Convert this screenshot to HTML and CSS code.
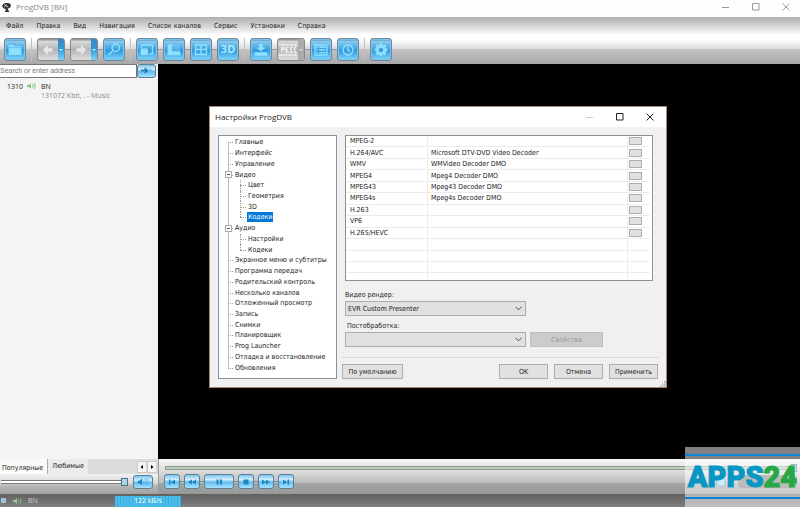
FILE: index.html
```html
<!DOCTYPE html>
<html lang="ru">
<head>
<meta charset="utf-8">
<title>ProgDVB [BN]</title>
<link rel="stylesheet" href="styles.css">
</head>
<body>
<div class="app">
  <header class="titlebar">
    <svg class="app-icon" viewBox="0 0 10 10"><path d="M1 3.5Q2 .5 5 1Q9 .5 9 3.5Q8.500 6 6 6L7.500 9H3.500L4.500 6.500Q1.500 6 1 3.500Z" fill="#333"/><path d="M3 2.500L6.500 4.500M3 4.500L5 2.500" stroke="#ddd" stroke-width=".9"/></svg>
    <span class="app-title">ProgDVB [BN]</span>
    <span class="win-buttons">
      <button aria-label="Свернуть"><svg viewBox="0 0 8 8"><path d="M0 4.500H7"/></svg></button>
      <button aria-label="Развернуть"><svg viewBox="0 0 8 8"><path d="M.5 .5H7V7H.5Z"/></svg></button>
      <button aria-label="Закрыть"><svg viewBox="0 0 8 8"><path d="M.5 .5L7.500 7.500M7.500 .5L.5 7.500"/></svg></button>
    </span>
  </header>

  <div class="top">
    <nav class="menu">
      <a href="#">Файл</a><a href="#">Правка</a><a href="#">Вид</a><a href="#">Навигация</a><a href="#">Список каналов</a><a href="#">Сервис</a><a href="#">Установки</a><a href="#">Справка</a>
    </nav>
    <div class="toolbar">
      <div class="group">
        <button class="tool" aria-label="Открыть"><svg viewBox="0 0 22 22"><path class="f" d="M4 6H9L10.500 7.500H18V17H4Z"/><path class="d" d="M4 9H18"/></svg></button>
      </div>
      <div class="group linked">
        <button class="tool split grey" aria-label="Назад"><svg viewBox="0 0 22 22"><path class="f" d="M5 11.500L11 6V9.500H16V13.500H11V17Z"/></svg><i class="drop"></i></button>
        <button class="tool split grey" aria-label="Вперёд"><svg viewBox="0 0 22 22"><path class="f" d="M17 11.500L11 6V9.500H6V13.500H11V17Z"/></svg><i class="drop"></i></button>
        <button class="tool" aria-label="Поиск"><svg viewBox="0 0 22 22"><circle class="l" cx="13" cy="9" r="4"/><path class="l" d="M10 12L5 17"/></svg></button>
      </div>
      <div class="group linked">
        <button class="tool" aria-label="Окно"><svg viewBox="0 0 22 22"><path class="l" d="M5 9V6H17V16H14"/><path class="f" d="M4 10H12V17H4Z"/></svg></button>
        <button class="tool" aria-label="Картинка в картинке"><svg viewBox="0 0 22 22"><path class="l" d="M10 6H5V16.500H17V13"/><path class="f" d="M10 6H18V13H10Z" opacity=".3"/><path class="f" d="M4 6H9V13H17V17H4Z"/></svg></button>
        <button class="tool" aria-label="Мозаика"><svg viewBox="0 0 22 22"><path class="l" d="M5 6H17V16.500H5ZM11 6V16.500M5 11H17"/></svg></button>
        <button class="tool label3d">3D</button>
      </div>
      <div class="group linked">
        <button class="tool" aria-label="Запись"><svg viewBox="0 0 22 22"><path class="f" d="M9 5H13V9H16L11 13L6 9H9ZM4 14H18V18H4Z"/></svg></button>
        <button class="tool split rec" aria-label="Rec"><svg viewBox="0 0 22 22"><path class="l" d="M1 6H20L18 11L20 17H1M4 14V9H7V11H4M12 9H9V14H12M9 11.500H11M17 9H14V14H17"/></svg><i class="drop"></i></button>
        <button class="tool" aria-label="Список"><svg viewBox="0 0 22 22"><path class="l" d="M4.500 6H17.500V17H4.500ZM6 8.500H7.500M9 8.500H16M6 11.500H7.500M9 11.500H16M6 14.500H7.500M9 14.500H16"/></svg></button>
        <button class="tool" aria-label="Расписание"><svg viewBox="0 0 22 22"><circle class="l" cx="11" cy="11.500" r="5.500"/><path class="l" d="M11 8V12L13.500 13.500"/></svg></button>
      </div>
      <div class="group">
        <button class="tool" aria-label="Настройки"><svg viewBox="0 0 22 22"><circle class="l thick" cx="11" cy="11.500" r="4"/><path class="l thick" d="M11 4.500V8M11 15V18.500M4 11.500H7M15 11.500H18M6 6.500L8.500 9M13.500 14L16 16.500M16 6.500L13.500 9M8.500 14L6 16.500"/></svg></button>
      </div>
    </div>
  </div>

  <div class="content">
    <aside class="side">
      <div class="search"><input type="text" placeholder="Search or enter address" aria-label="Search or enter address"><button class="glossy go" aria-label="Перейти"><svg viewBox="0 0 18 12"><path d="M3 5.500H9M7 3L10 5.500L7 8" fill="none" stroke="#1878b4" stroke-width="1.500"/><path d="M12.500 3V8M14.500 4V7" stroke="#62b4e0"/></svg></button></div>
      <div class="channels">
        <div class="channel">
          <span>1310</span>
          <svg class="speaker" viewBox="0 0 10 8"><path d="M0 3H2L4 1V7L2 5H0Z" fill="#7ac68a"/><path d="M5.500 2.500Q6.800 4 5.500 5.500M7 1Q9.800 4 7 7" fill="none" stroke="#7ac68a"/></svg>
          <div>BN<div class="rate">131072 Kbit, . - Music</div></div>
        </div>
      </div>
      <div class="tabs"><button class="tab on">Популярные</button><button class="tab">Любимые</button><span class="arrows"><button aria-label="Влево"><svg viewBox="0 0 6 6"><path d="M4 1L1.500 3L4 5Z"/></svg></button><button aria-label="Вправо"><svg viewBox="0 0 6 6"><path d="M2 1L4.500 3L2 5Z"/></svg></button></span></div>
      <div class="volume"><input type="range" value="100" aria-label="Громкость"><button class="glossy mute" aria-label="Звук"><svg viewBox="0 0 20 14"><path d="M4 5.500H6L9 3V11L6 8.500H4Z" fill="#1c84c0"/><path d="M11 5V9M13 3V11M15.500 3V11" stroke="#62b4e0"/></svg></button></div>
    </aside>

    <main class="stage">
      <div class="video">
        <section class="dialog" role="dialog" aria-labelledby="dlg-title">
          <header class="dlg-head">
            <span id="dlg-title">Настройки ProgDVB</span>
            <span class="win-buttons">
              <button aria-label="Свернуть" disabled><svg viewBox="0 0 8 8"><path d="M0 4.500H7"/></svg></button>
              <button aria-label="Развернуть"><svg viewBox="0 0 8 8"><path d="M.5 .5H7V7H.5Z"/></svg></button>
              <button aria-label="Закрыть"><svg viewBox="0 0 8 8"><path d="M.5 .5L7.500 7.500M7.500 .5L.5 7.500"/></svg></button>
            </span>
          </header>
          <div class="dlg-body">
            <ul class="tree">
              <li class="first">Главные</li><li>Интерфейс</li><li>Управление</li>
              <li class="open">Видео</li>
              <li class="sub">Цвет</li><li class="sub">Геометрия</li><li class="sub">3D</li><li class="sub last"><span class="sel">Кодеки</span></li>
              <li class="open">Аудио</li>
              <li class="sub">Настройки</li><li class="sub last">Кодеки</li>
              <li>Экранное меню и субтитры</li><li>Программа передач</li><li>Родительский контроль</li><li>Несколько каналов</li><li>Отложенный просмотр</li><li>Запись</li><li>Снимки</li><li>Планировщик</li><li>Prog Launcher</li><li>Отладка и восстановление</li><li class="end">Обновления</li>
            </ul>
            <div class="panel">
              <div class="codecs">
                <table>
                  <tr><td>MPEG-2</td><td></td><td><button aria-label="MPEG-2"></button></td></tr>
                  <tr><td>H.264/AVC</td><td>Microsoft DTV-DVD Video Decoder</td><td><button aria-label="H.264/AVC"></button></td></tr>
                  <tr><td>WMV</td><td>WMVideo Decoder DMO</td><td><button aria-label="WMV"></button></td></tr>
                  <tr><td>MPEG4</td><td>Mpeg4 Decoder DMO</td><td><button aria-label="MPEG4"></button></td></tr>
                  <tr><td>MPEG43</td><td>Mpeg43 Decoder DMO</td><td><button aria-label="MPEG43"></button></td></tr>
                  <tr><td>MPEG4s</td><td>Mpeg4s Decoder DMO</td><td><button aria-label="MPEG4s"></button></td></tr>
                  <tr><td>H.263</td><td></td><td><button aria-label="H.263"></button></td></tr>
                  <tr><td>VP6</td><td></td><td><button aria-label="VP6"></button></td></tr>
                  <tr><td>H.265/HEVC</td><td></td><td><button aria-label="H.265/HEVC"></button></td></tr>
                  <tr><td></td><td></td><td></td></tr>
                  <tr><td></td><td></td><td></td></tr>
                  <tr><td></td><td></td><td></td></tr>
                  <tr><td></td><td></td><td></td></tr>
                </table>
              </div>
              <div class="options">
                <label for="render">Видео рендер:</label>
                <select id="render"><option>EVR Custom Presenter</option></select>
                <label for="post" class="post-label">Постобработка:</label>
                <select id="post"><option></option></select>
                <button class="btn" disabled>Свойства</button>
              </div>
              <div class="actions"><button class="btn">По умолчанию</button><button class="btn">OK</button><button class="btn">Отмена</button><button class="btn">Применить</button></div>
            </div>
          </div>
          <svg class="grip" viewBox="0 0 6 6"><path d="M4 0H6V2H4ZM2 2.500H3.500V4H2ZM4 2.500H6V4H4ZM0 4.500H1.500V6H0ZM2 4.500H3.500V6H2ZM4 4.500H6V6H4Z" fill="#bbb"/></svg>
        </section>
      </div>
      <div class="player">
        <div class="seek-row"><progress class="seek" value="0" max="100" aria-label="Позиция"></progress><i class="mini"></i></div>
        <div class="deck">
          <div class="keys">
            <button class="glossy" aria-label="Назад"><svg viewBox="0 0 10 8"><path d="M2 1.500H3.500V6.500H2ZM8 1.500V6.500L4 4Z"/></svg></button>
            <button class="glossy" aria-label="Перемотка назад"><svg viewBox="0 0 10 8"><path d="M5 1.500V6.500L1 4ZM9 1.500V6.500L5 4Z"/></svg></button>
            <button class="glossy wide" aria-label="Пауза"><svg viewBox="0 0 10 8"><path d="M2.500 1.500H4.500V6.500H2.500ZM6 1.500H8V6.500H6Z"/></svg></button>
            <button class="glossy" aria-label="Стоп"><svg viewBox="0 0 10 8"><path d="M2.500 1.500H7.500V6.500H2.500Z"/></svg></button>
            <button class="glossy" aria-label="Перемотка вперёд"><svg viewBox="0 0 10 8"><path d="M1 1.500V6.500L5 4ZM5 1.500V6.500L9 4Z"/></svg></button>
            <button class="glossy" aria-label="Вперёд"><svg viewBox="0 0 10 8"><path d="M2 1.500V6.500L6 4ZM6.500 1.500H8V6.500H6.500Z"/></svg></button>
          </div>
          <i class="round"></i><i class="clock"></i>
        </div>
      </div>
    </main>
  </div>

  <footer class="status"><i class="stop"></i><svg class="speaker" viewBox="0 0 10 8"><path d="M0 3H2L4 1V7L2 5H0Z" fill="#a6c8a6"/><path d="M5.500 2.500Q6.800 4 5.500 5.500M7 1Q9.800 4 7 7" fill="none" stroke="#78bc78"/></svg><span class="station">BN</span><span class="speed">122 kB/s</span></footer>
  <div class="brand"><span class="apps">APPS</span><span class="num">24</span></div>
</div>
</body>
</html>
```
FILE: styles.css
```css
*, *::before, *::after { box-sizing: border-box; }
html, body { height: 100%; }
body { margin: 0; font: 7px/10px "DejaVu Sans Condensed", "DejaVu Sans", sans-serif; color: #222; overflow: hidden; }
button, input, select { font: inherit; color: inherit; margin: 0; padding: 0; border: 0; background: none; }
a { color: inherit; text-decoration: none; }
.app { position: relative; height: 100%; display: flex; flex-direction: column; background: #f0f0f0; }

.titlebar { display: flex; align-items: center; height: 17px; padding: 0 10px 3px 1px; gap: 4px; background: #fefefe; flex: none; }
.app-icon { width: 11px; height: 11px; }
.app-title { font: 8px/12px "Open Sans", sans-serif; color: #888; }
.win-buttons { display: flex; gap: 22px; margin-left: auto; }
.win-buttons button { display: flex; width: 8px; }
.win-buttons svg { width: 8px; height: 8px; fill: none; stroke: #999; }

.top { flex: none; height: 47px; background: linear-gradient(#b0aeae, #d6d6d6 20%, #fff 38%, #fff 48%, #dcdcdc 67%, #c4c4c4 69%, #a8a8a8); }
.menu { display: flex; gap: 13px; padding: 4px 6px 0; }
.toolbar { display: flex; padding: 7px 4px 0; }
.group { display: flex; gap: 5px; }
.group + .group { border-left: 1px solid #c0c0c0; margin-left: 5px; padding-left: 5px; }
.linked { background: linear-gradient(#999, #999) center / 100% 1px no-repeat content-box; }
.tool { display: flex; width: 22px; height: 23px; border: 1px solid #6f8796; border-radius: 3px; background: linear-gradient(#3a87b8, #8cc9ec 12%, #3ba4e2 48%, #2f9bdd 55%, #7fd4fa); overflow: hidden; box-shadow: inset 0 0 0 1px #7cc4ec; }
.tool svg { width: 20px; height: 21px; flex: none; }
.tool .f { fill: #8fe0ff; }
.tool .d { stroke: #55bdf0; }
.tool .l { fill: none; stroke: #8fe0ff; stroke-width: 1.5px; }
.tool .thick { stroke-width: 3px; }
.split { width: 28px; }
.grey, .rec { background: linear-gradient(#888, #d8d8d8 12%, #b5b5b5 50%, #dedede); border-color: #888; box-shadow: none; }
.grey .f { fill: #e6e6e6; }
.rec .l { stroke: #ececec; }
.drop { display: flex; align-items: center; justify-content: center; width: 7px; height: 21px; background: linear-gradient(#3a87b8, #2f9bdd 50%, #7fd4fa); }
.rec .drop { background: #aaa; }
.drop::after { content: ""; border: 2px solid transparent; border-top-color: #c4eeff; border-bottom: 0; }
.label3d { align-items: center; justify-content: center; font: bold 11px/20px "DejaVu Sans Condensed", sans-serif; color: #a2e6ff; }

.content { flex: 1; display: flex; min-height: 0; }
.side { width: 158px; flex: none; display: flex; flex-direction: column; }
.search { display: flex; height: 14px; padding-right: 2px; }
.search input { flex: 1; min-width: 0; background: #fff; border: 1px solid #777; border-left: 0; font-family: "Liberation Sans", sans-serif; }
.search input::placeholder { color: #777; opacity: 1; }
.glossy { display: flex; align-items: center; justify-content: center; border: 1px solid #5d7f94; border-radius: 3px; background: linear-gradient(#7cc4ee, #d0efff 35%, #64bdf0 55%, #a6e2ff); }
.go { width: 19px; }
.go svg { width: 17px; height: 12px; }
.channels { flex: 1; background: #f4f4f4; padding: 4px 7px; }
.channel { display: flex; gap: 4px; line-height: 9px; font-family: "Open Sans", sans-serif; }
.rate { color: #888; }
.speaker { width: 10px; height: 8px; }
.tabs { display: flex; height: 15px; background: #dcdcdc; }
.tab { padding: 0 4px 2px; background: #ececec; }
.tab.on { background: #fafafa; padding: 2px 4px 0 2px; border-right: 1px solid #aaa; }
.arrows { margin-left: auto; display: flex; padding: 2px 1px 1px; }
.arrows button { width: 10px; display: flex; align-items: center; justify-content: center; background: #f4f4f4; border: 1px solid #ccc; }
.arrows svg { width: 6px; height: 6px; }
.volume { display: flex; align-items: center; height: 20px; padding: 0 5px 4px 1px; gap: 5px; background: linear-gradient(#f2f2f2, #d8d8d8 45%, #b6b6b6 60%, #a2a2a2); }
.volume input { appearance: none; flex: 1; min-width: 0; height: 8px; background: linear-gradient(#777 1px, #fff 1px 3px, #777 3px) center / 100% 4px no-repeat; }
.volume input::-webkit-slider-thumb { appearance: none; width: 7px; height: 8px; border: 1px solid #55707e; background: #a6d4ec; }
.mute { width: 20px; height: 14px; }
.mute svg { width: 18px; height: 12px; }

.stage { flex: 1; min-width: 0; display: flex; flex-direction: column; }
.video { flex: 1; min-height: 0; background: #000; padding: 42px 133px 71px 51px; display: flex; }
.dialog { position: relative; flex: 1; display: flex; flex-direction: column; background: #f0f0f0; border: 1px solid #a98770; }
.dlg-head { display: flex; align-items: center; height: 20px; padding: 0 12px 0 5px; background: #fff; font: 8px/12px "Open Sans", sans-serif; flex: none; }
.dlg-head svg { stroke: #222; }
.dlg-head button:disabled svg { stroke: #ccc; }
.dlg-body { flex: 1; min-height: 0; display: flex; gap: 5px; padding: 8px 7px 8px 8px; }
.tree { width: 119px; margin: 0; padding: 1px 0 5px 9px; list-style: none; background: #fff; border: 1px solid #8b919a; display: grid; grid-auto-rows: 1fr; white-space: nowrap; }
.tree li { position: relative; display: flex; align-items: center; padding-left: 7px; min-height: 0; background: linear-gradient(#bbb, #bbb) 0 0 / 1px 100% no-repeat; }
.tree li.first { background-position: 0 100%; background-size: 1px 50%; }
.tree li.end { background-size: 1px 50%; }
.tree li::before { content: ""; position: absolute; left: 0; top: 50%; width: 5px; border-top: 1px dotted #999; }
.tree .sub { padding-left: 20px; }
.tree .sub::before { left: 12px; width: 6px; }
.tree .sub::after { content: ""; position: absolute; left: 12px; top: 0; bottom: 0; border-left: 1px dotted #999; }
.tree .sub.last::after { bottom: 50%; }
.tree .open::after { content: ""; position: absolute; left: -3px; top: 2px; width: 7px; height: 7px; border: 1px solid #aaa; background: linear-gradient(#555, #555) center / 3px 1px no-repeat, #fff; }
.sel { background: #0078d7; color: #fff; padding: 0 1px; margin-left: -1px; }
.panel { flex: 1; min-width: 0; display: flex; flex-direction: column; }
.codecs { height: 146px; margin: 0 6px 0 3px; background: #fff; border: 1px solid #8b919a; overflow: hidden; }
table { width: calc(100% - 2px); height: 149px; table-layout: fixed; border-collapse: separate; border-spacing: 0; }
td { height: 11px; padding: 0 4px; border-bottom: 1px solid #ececec; border-right: 1px solid #ececec; line-height: 10px; white-space: nowrap; }
td:first-child { width: 82px; }
td:last-child { width: 22px; padding: 0 1px; border-right: 0; }
td:nth-child(2) { padding-left: 3px; }
td button { display: block; width: 13px; height: 8px; background: #e1e1e1; border: 1px solid #adadad; }
.options { display: grid; grid-template-columns: 181px 73px; column-gap: 4px; row-gap: 1px; padding: 9px 0 0 3px; }
.options label { grid-column: 1 / -1; }
.options .post-label { padding: 4px 0 0 2px; }
select { appearance: none; height: 15px; padding: 0 2px; border: 1px solid #adadad; border-radius: 0; }
.options select { grid-column: 1; background: #e1e1e1 url("data:image/svg+xml,%3Csvg xmlns='http://www.w3.org/2000/svg' width='7' height='5'%3E%3Cpath d='M.5 .8L3.500 3.800L6.500 .8' fill='none' stroke='%23444'/%3E%3C/svg%3E") right 3px center no-repeat; }
.btn { height: 15px; border: 1px solid #adadad; background: #e1e1e1; white-space: nowrap; }
.btn:disabled { background: #ccc; border-color: #bfbfbf; color: #999; }
.actions { display: flex; gap: 6px; margin-top: auto; padding: 6px 1px 0 0; border-top: 1px solid #d9d9d9; }
.actions .btn { width: 49px; }
.actions .btn:first-child { width: 61px; margin-right: auto; }
.grip { position: absolute; right: 0; bottom: 0; width: 6px; height: 6px; }

.player { flex: none; height: 35px; padding: 6px 3px 0 5px; border-left: 1px solid #999; background: linear-gradient(#f6f6f6, #dcdcdc 35%, #bcbcbc 68%, #a4a4a4 70%, #989898); }
.seek-row { display: flex; align-items: center; height: 5px; gap: 2px; padding-left: 1px; }
.seek { appearance: none; flex: 1; min-width: 0; height: 4px; border: 1px solid #8c998c; background: #b8ccbc; }
.seek::-webkit-progress-bar { background: #b8ccbc; }
.mini { width: 6px; height: 8px; border: 1px solid #55707e; background: #a6d4ec; flex: none; }
.deck { display: flex; align-items: center; gap: 12px; margin-top: 4px; }
.keys { display: flex; gap: 4px; margin-right: auto; background: linear-gradient(#888, #888) center / 100% 1px no-repeat; }
.keys .glossy { width: 16px; height: 15px; }
.keys .wide { width: 30px; }
.keys svg { width: 10px; height: 8px; fill: #1c84c0; }
.round { width: 10px; height: 10px; border: 1px solid #3d87b4; border-radius: 50%; background: #9cdcff; }
.clock { width: 59px; height: 13px; border-radius: 4px; background: #777; }
.status { flex: none; height: 13px; display: flex; align-items: center; padding-left: 1px; background: linear-gradient(#606060, #808080); color: #ccc; font: 7px/10px "Open Sans", sans-serif; }
.status .speaker { margin: 0 5px 0 7px; }
.stop { width: 5px; height: 5px; background: #9cc4e0; }
.station { width: 87px; }
.speed { width: 66px; height: 11px; align-self: flex-end; text-align: center; color: #fff; background: repeating-linear-gradient(90deg, #4cbce8 0 2px, #38aee0 2px 3px); }
.brand { position: absolute; right: 0; bottom: 0; width: 115px; height: 60px; text-align: center; white-space: nowrap; font: 900 29px/60px Roboto, sans-serif; background: linear-gradient(transparent 7px, #0a84dc 7px 9px, transparent 9px 50px, #0a84dc 50px 52px, transparent 52px), rgba(255, 255, 255, .5); }
.apps { color: #0897c4; -webkit-text-stroke: 1px #0897c4; }
.num { color: #28a745; -webkit-text-stroke: 1px #28a745; }
```
